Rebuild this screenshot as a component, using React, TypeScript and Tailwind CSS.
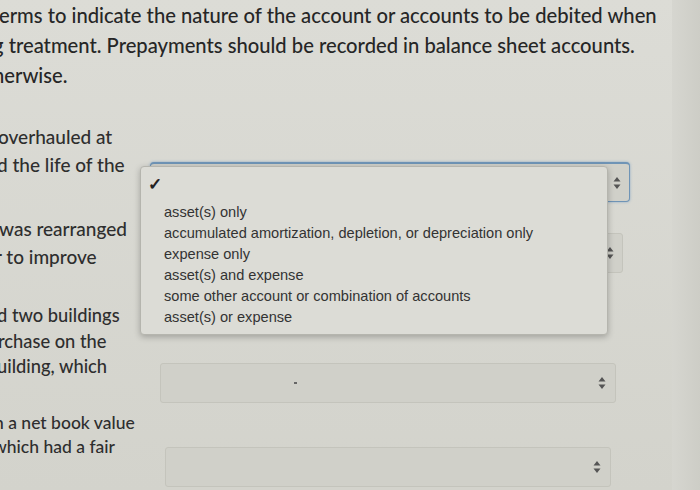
import React from "react";

const options = [
  "asset(s) only",
  "accumulated amortization, depletion, or depreciation only",
  "expense only",
  "asset(s) and expense",
  "some other account or combination of accounts",
  "asset(s) or expense",
];

function Arrows({ className = "" }: { className?: string }) {
  return (
    <svg viewBox="0 0 8 14" className={`h-[14px] w-[8px] ${className}`} aria-hidden="true">
      <path d="M4 1 L7.5 5.5 H0.5 Z M4 13 L7.5 8.5 H0.5 Z" fill="#555" />
    </svg>
  );
}

function Select({
  className = "",
  focused = false,
  children,
}: {
  className?: string;
  focused?: boolean;
  children?: React.ReactNode;
}) {
  const edge = focused
    ? "rounded-[4px] border border-t-2 border-[#6f94b6] shadow-[0_0_3px_#8fabc6]"
    : "rounded-[3px] border border-[#c4c4bc]";
  return (
    <div className={`relative flex h-[40px] items-center justify-end bg-[#d0d0c9] ${edge} ${className}`}>
      {children}
      <Arrows />
    </div>
  );
}

export default function App() {
  return (
    <div
      className="relative h-[490px] w-[700px] overflow-hidden bg-linear-to-b from-[#dcdcd6] to-[#d3d3cc] font-medium text-[#262626]"
      style={{ fontFamily: "Lato, 'Open Sans', sans-serif" }}
    >
      <div className="absolute right-0 top-0 h-full w-[28px] bg-linear-to-r from-[#d6d6d0] to-[#cdcdc6]" />

      <div className="relative text-[20.2px] leading-[30px]">
        <p className="-ml-[1px]">erms to indicate the nature of the account or accounts to be debited when</p>
        <p className="-ml-[7px]">g treatment. Prepayments should be recorded in balance sheet accounts.</p>
        <p className="-ml-[7px]">herwise.</p>
      </div>

      <div className="relative mt-[33px] flex flex-col text-[19px] text-[#2e2e2e]">
        {/* row A */}
        <div className="flex h-[92px]">
          <div className="w-[150px] shrink-0 leading-[28px]">
            <p className="-ml-[2px]">overhauled at</p>
            <p className="-ml-[3px]">d the life of the</p>
          </div>
          <div className="pt-[39px]">
            <Select focused className="w-[480px] pr-[8px]" />
          </div>
        </div>

        {/* row B */}
        <div className="flex h-[88px]">
          <div className="w-[150px] shrink-0 leading-[28px]">
            <p className="-ml-[1px]">was rearranged</p>
            <p className="-ml-[5px]">r to improve</p>
          </div>
          <div className="pt-[18px]">
            <Select className="w-[473px] pr-[8px]" />
          </div>
        </div>

        {/* row C */}
        <div className="flex h-[108px] text-[18.3px]">
          <div className="w-[160px] shrink-0 leading-[25.5px]">
            <p className="-ml-[3px]">d two buildings</p>
            <p className="-ml-[2px]">rchase on the</p>
            <p className="-ml-[3px]">uilding, which</p>
          </div>
          <div className="pt-[60px]">
            <Select className="w-[456px] pr-[9px]">
              <span className="absolute left-[133px] top-[18px] h-[2px] w-[3px] bg-[#666]" />
            </Select>
          </div>
        </div>

        {/* row D */}
        <div className="flex text-[17.5px]">
          <div className="w-[165px] shrink-0 leading-[24px]">
            <p className="-ml-[6px]">n a net book value</p>
            <p className="-ml-[7px]">which had a fair</p>
          </div>
          <div className="pt-[36px]">
            <Select className="w-[446px] pr-[9px]" />
          </div>
        </div>
      </div>

      {/* open dropdown menu */}
      <div
        className="absolute left-[140px] top-[166px] w-[468px] rounded-[4px] border border-[#b5b5ae] bg-[#dcdcd6] pb-[6px] pt-[6px] font-normal shadow-[0_2px_6px_rgba(0,0,0,0.25)]"
        style={{ fontFamily: "'Liberation Sans', Arial, sans-serif" }}
      >
        <div className="pl-[7px] text-[17px] font-bold leading-[24px] text-[#222]">✓</div>
        <ul className="mt-[5px] pl-[23px] text-[14.6px] leading-[21px] text-[#333]">
          {options.map((o) => (
            <li key={o}>{o}</li>
          ))}
        </ul>
      </div>
    </div>
  );
}
